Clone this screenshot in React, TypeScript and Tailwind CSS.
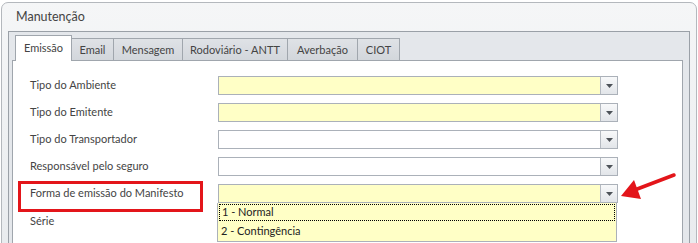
const tabs = [
  { label: "Emissão", w: "w-[57px]" },
  { label: "Email", w: "w-[42px]" },
  { label: "Mensagem", w: "w-[69px]" },
  { label: "Rodoviário - ANTT", w: "w-[105px]" },
  { label: "Averbação", w: "w-[70px]" },
  { label: "CIOT", w: "w-[42px]" },
];

const fields = [
  { label: "Tipo do Ambiente", required: true },
  { label: "Tipo do Emitente", required: true },
  { label: "Tipo do Transportador", required: false },
  { label: "Responsável pelo seguro", required: false },
  { label: "Forma de emissão do Manifesto", required: true },
];

const DropButton = () => (
  <div className="flex h-full w-[17px] items-center justify-center border-l border-[#b5bac1] bg-gradient-to-b from-[#f8f9fa] to-[#e2e5e9]">
    <svg width="7" height="4" viewBox="0 0 7 4">
      <path d="M0 0 H7 L3.5 4 Z" fill="#4d5258" />
    </svg>
  </div>
);

const Combo = ({ required }: { required: boolean }) => (
  <div
    className={`flex h-[19px] w-[400px] border border-[#abb1b9] ${
      required ? "bg-[#ffffc6]" : "bg-white"
    }`}
  >
    <div className="flex-1" />
    <DropButton />
  </div>
);

export default function App() {
  return (
    <div
      className="relative h-[243px] w-[698px] overflow-hidden bg-white text-[11px] text-[#444]"
      style={{ fontFamily: "'Segoe UI', Lato, 'Noto Sans', sans-serif" }}
    >
      <div className="ml-[1px] mt-[2px] h-[260px] w-[696px] rounded-t-[7px] border border-[#b4b8bd] bg-gradient-to-b from-[#f5f6f7] to-[#e8ebee]">
        <div className="flex h-[28px] items-center pl-[14px] text-[12.5px] text-[#444]">
          Manutenção
        </div>

        <div className="ml-[6px] h-[240px] w-[682px] border border-[#9aa0a7] bg-[#e4e7eb] pl-[3px] pr-[6px] pt-[3px]">
          <div className="flex h-[26px] items-end pl-[3px]">
            {tabs.map((t, i) =>
              i === 0 ? (
                <div
                  key={t.label}
                  className={`${t.w} relative z-10 flex h-[26px] items-center justify-center border border-b-0 border-[#a0a6ad] bg-white pb-[1px]`}
                >
                  {t.label}
                </div>
              ) : (
                <div
                  key={t.label}
                  className={`${t.w} flex h-[23px] items-center justify-center border border-b-0 border-l-0 border-[#a0a6ad] bg-gradient-to-b from-[#dfe2e6] to-[#d2d6db]`}
                >
                  {t.label}
                </div>
              ),
            )}
          </div>

          <div className="relative -mt-[1px] h-[200px] w-[671px] border border-[#a0a6ad] bg-white pl-[17px] pt-[15px]">
            <div className="flex flex-col gap-[8px]">
              {fields.map((f) => (
                <div key={f.label} className="flex h-[19px] items-center">
                  <div className="w-[188px]">{f.label}</div>
                  <Combo required={f.required} />
                </div>
              ))}
              <div className="flex h-[19px] items-center">
                <div className="w-[188px] pt-[2px]">Série</div>
                <div className="h-[19px] w-[100px] border border-[#abb1b9] bg-[#ffffc6]" />
              </div>
            </div>

            {/* open dropdown list */}
            <div className="absolute left-[204px] top-[142px] z-10 w-[400px] border border-t-0 border-[#abb1b9] bg-[#ffffc6] text-[#222]">
              <div className="m-[1px] flex h-[17px] items-center border border-dotted border-black pl-[2px]">
                1 - Normal
              </div>
              <div className="flex h-[19px] items-center pl-[3px]">
                2 - Contingência
              </div>
            </div>
          </div>
        </div>
      </div>

      {/* highlight box */}
      <div className="absolute left-[18px] top-[181px] h-[31px] w-[185px] border-[3px] border-[#e3151a]" />

      {/* red arrow */}
      <svg className="absolute left-0 top-0" width="698" height="243">
        <line x1="674" y1="175" x2="632" y2="191" stroke="#e3151a" strokeWidth="3.5" strokeLinecap="round" />
        <polygon points="621,196 634,180 641,199" fill="#e3151a" />
      </svg>
    </div>
  );
}
